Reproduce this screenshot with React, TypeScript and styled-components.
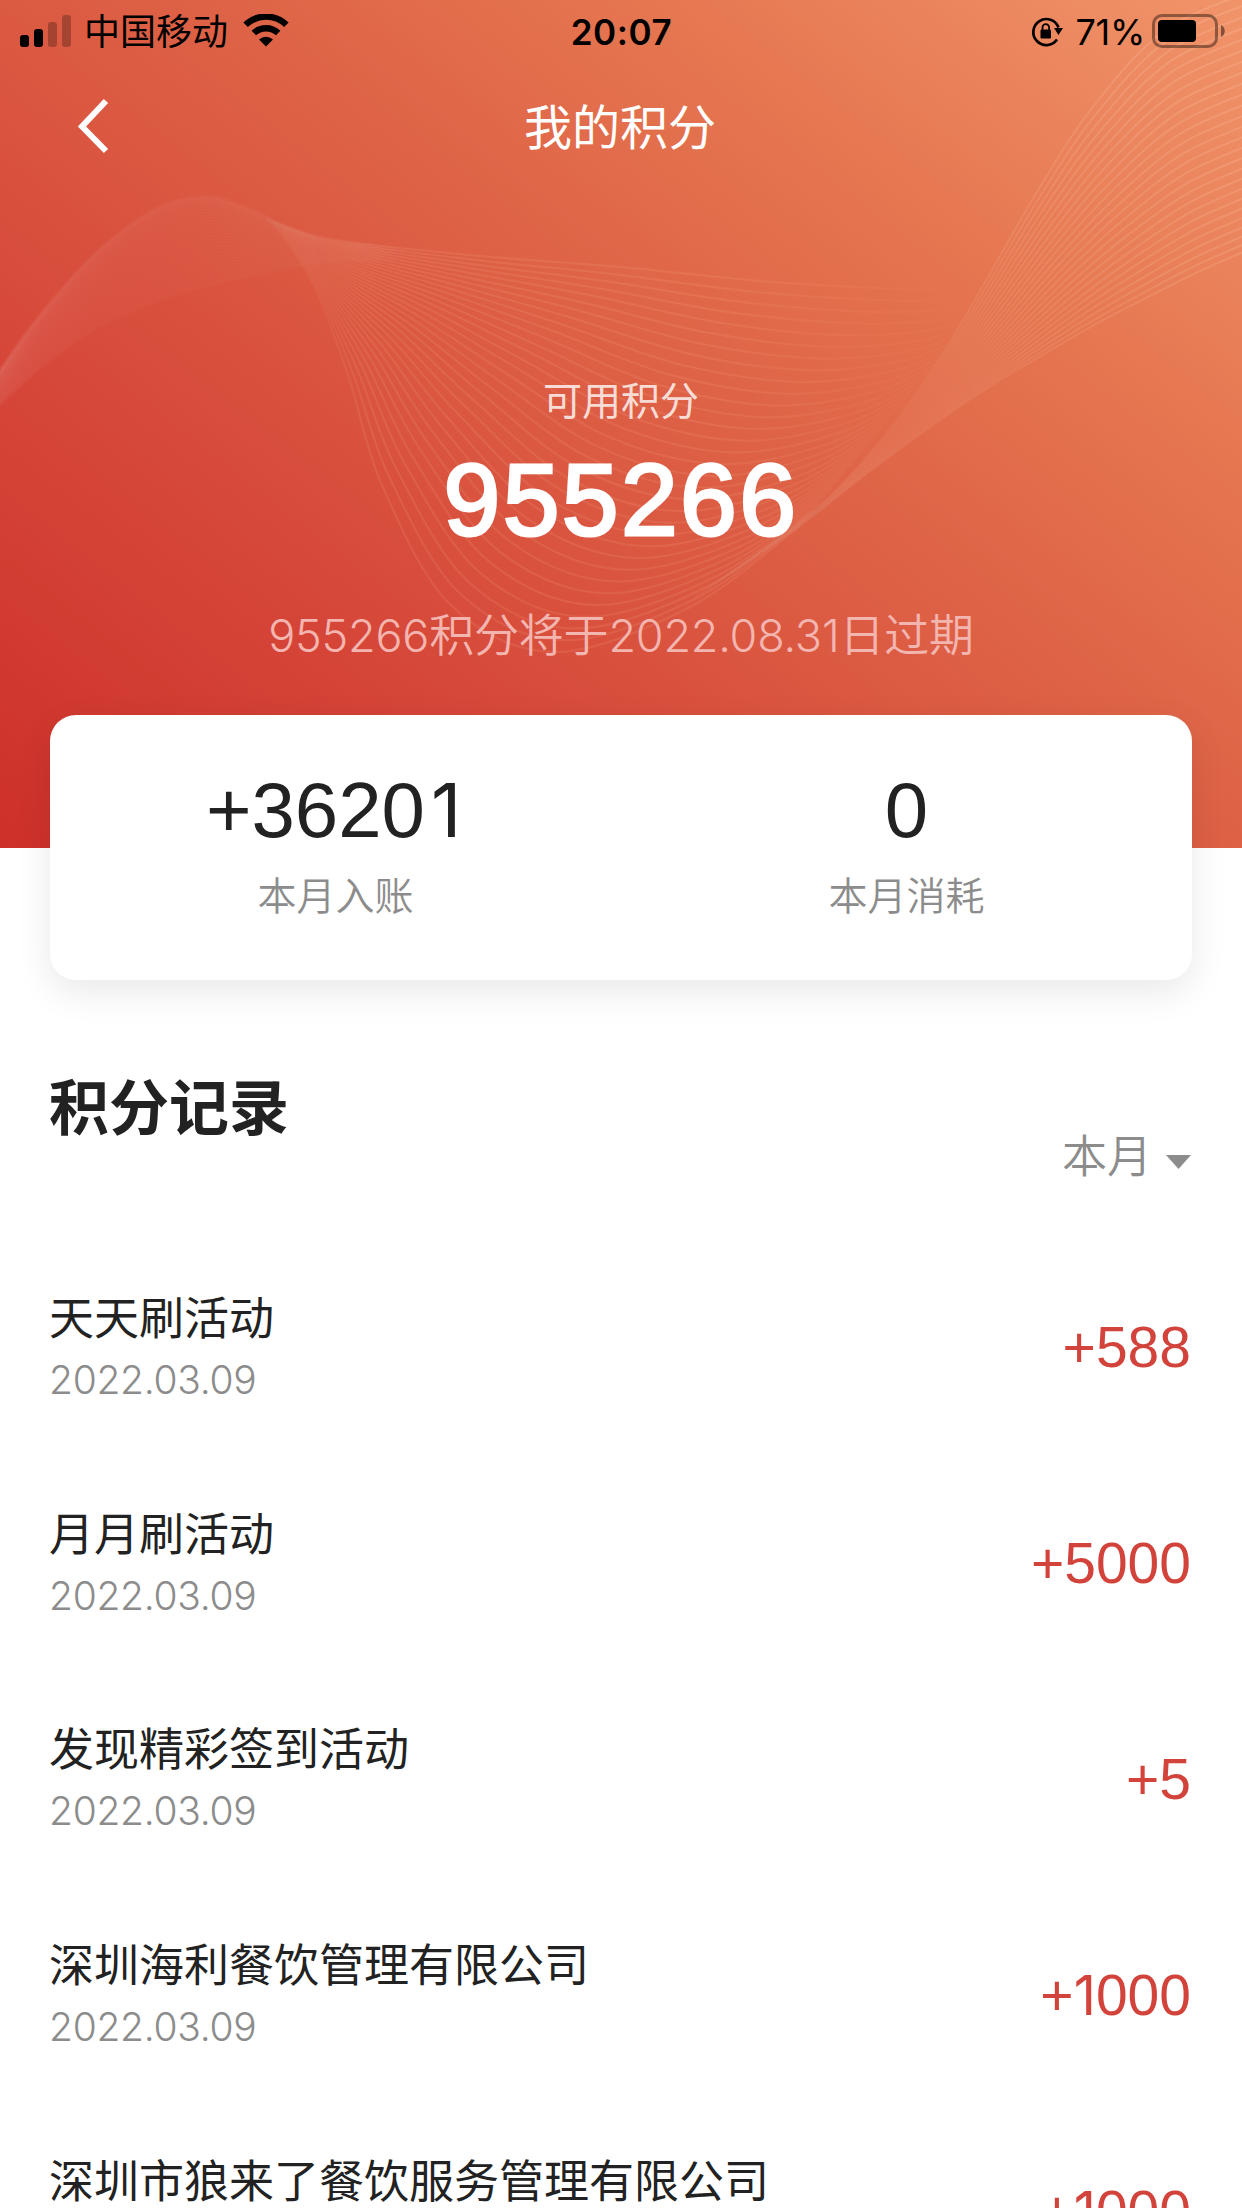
import React from 'react';
import styled, { createGlobalStyle } from 'styled-components';

const GlobalStyle = createGlobalStyle`
  * { box-sizing: border-box; }
  body {
    margin: 0;
    background: #ffffff;
    font-family: Inter, "Noto Sans CJK SC", sans-serif;
    color: #222222;
  }
`;

type Point = [number, number];

const lerpLine = (a: Point[], b: Point[], t: number): Point[] =>
  a.map(([x, y], i) => [x + (b[i][0] - x) * t, y + (b[i][1] - y) * t]);

const smoothPath = (pts: Point[]): string => {
  let d = `M${pts[0][0].toFixed(1)} ${pts[0][1].toFixed(1)}`;
  for (let i = 0; i < pts.length - 1; i++) {
    const p0 = pts[Math.max(0, i - 1)];
    const p1 = pts[i];
    const p2 = pts[i + 1];
    const p3 = pts[Math.min(pts.length - 1, i + 2)];
    const c = [
      p1[0] + (p2[0] - p0[0]) / 6,
      p1[1] + (p2[1] - p0[1]) / 6,
      p2[0] - (p3[0] - p1[0]) / 6,
      p2[1] - (p3[1] - p1[1]) / 6,
      p2[0],
      p2[1],
    ].map((v) => v.toFixed(1));
    d += `C${c.join(' ')}`;
  }
  return d;
};

const family = (a: Point[], b: Point[], count: number, ease = 1): string[] =>
  Array.from({ length: count }, (_, i) =>
    smoothPath(lerpLine(a, b, Math.pow(i / (count - 1), ease))),
  );

const crestLines = family(
  [[-6, 379], [40, 315], [99, 250], [158, 208], [206, 197], [250, 209], [290, 228], [341, 241], [436, 253]],
  [[-6, 410], [40, 368], [99, 326], [158, 300], [204, 286], [246, 276], [290, 268], [341, 262], [436, 262]],
  30,
  1.3,
);

const fanLines = family(
  [[262, 216], [300, 231], [341, 241], [480, 256], [620, 267], [760, 281], [880, 288], [960, 290], [1000, 288]],
  [[262, 216], [285, 240], [317, 293], [349, 378], [382, 485], [450, 604], [554, 652], [690, 607], [800, 526]],
  32,
);

const ribbonLines = family(
  [[640, 634], [791, 533], [872, 470], [977, 395], [1080, 333], [1140, 301], [1200, 271], [1260, 245]],
  [[640, 634], [784, 533], [860, 464], [940, 358], [1037, 192], [1096, 103], [1167, 29], [1260, -12]],
  26,
  1.1,
);

const Waves = () => (
  <WaveArt viewBox="0 0 1242 848" fill="none">
    <defs>
      <linearGradient id="crest" gradientUnits="userSpaceOnUse" x1="0" y1="0" x2="436" y2="0">
        <stop offset="0" stopColor="#fff" stopOpacity="0.02" />
        <stop offset="0.5" stopColor="#fff" stopOpacity="0.02" />
        <stop offset="0.75" stopColor="#fff" stopOpacity="0.008" />
        <stop offset="1" stopColor="#fff" stopOpacity="0" />
      </linearGradient>
      <linearGradient id="fan" gradientUnits="userSpaceOnUse" x1="262" y1="0" x2="1000" y2="0">
        <stop offset="0" stopColor="#ffc0a0" stopOpacity="0" />
        <stop offset="0.05" stopColor="#ffc0a0" stopOpacity="0.03" />
        <stop offset="0.14" stopColor="#ffc0a0" stopOpacity="0.12" />
        <stop offset="0.6" stopColor="#ffc0a0" stopOpacity="0.12" />
        <stop offset="1" stopColor="#ffc0a0" stopOpacity="0" />
      </linearGradient>
      <linearGradient id="ribbon" gradientUnits="userSpaceOnUse" x1="640" y1="600" x2="1242" y2="100">
        <stop offset="0" stopColor="#ffd8c0" stopOpacity="0" />
        <stop offset="0.25" stopColor="#ffd8c0" stopOpacity="0.014" />
        <stop offset="0.4" stopColor="#ffd8c0" stopOpacity="0.04" />
        <stop offset="0.6" stopColor="#ffd8c0" stopOpacity="0.11" />
        <stop offset="1" stopColor="#ffd8c0" stopOpacity="0.18" />
      </linearGradient>
    </defs>
    <g stroke="url(#crest)" strokeWidth="4">
      {crestLines.map((d, i) => <path key={i} d={d} />)}
    </g>
    <g stroke="url(#fan)" strokeWidth="2">
      {fanLines.map((d, i) => <path key={i} d={d} />)}
    </g>
    <g stroke="url(#ribbon)" strokeWidth="2">
      {ribbonLines.map((d, i) => <path key={i} d={d} />)}
    </g>
  </WaveArt>
);

const Screen = styled.main`
  width: 1242px;
  height: 2208px;
  overflow: hidden;
  background: #ffffff;
`;

const Hero = styled.header`
  position: relative;
  height: 848px;
  background: linear-gradient(38deg, #cd3029 0%, #d54437 24%, #dc5c43 49%, #e57650 74%, #f1946a 100%);
`;

const WaveArt = styled.svg`
  position: absolute;
  inset: 0;
  width: 1242px;
  height: 848px;
`;

const HeroContent = styled.div`
  position: relative;
  display: flex;
  flex-direction: column;
`;

const StatusBar = styled.div`
  display: grid;
  grid-template-columns: 1fr auto 1fr;
  align-items: center;
  height: 60px;
  padding: 0 16px 0 20px;
  color: #000000;
  font-size: 36px;
  line-height: 60px;
`;

const StatusSide = styled.div<{ $end?: boolean }>`
  display: flex;
  align-items: center;
  justify-content: ${(p) => (p.$end ? 'flex-end' : 'flex-start')};
`;

const Carrier = styled.span`
  margin: 2px 15px 0 12px;
`;

const Clock = styled.span`
  font-weight: 600;
  font-size: 35px;
  letter-spacing: 0.6px;
  padding: 1px 3px 0 0;
`;

const BatteryLevel = styled.span`
  margin: 1px 7px 0 13px;
  letter-spacing: -0.3px;
`;

const NavBar = styled.nav`
  display: grid;
  grid-template-columns: 120px 1fr 120px;
  align-items: center;
  height: 132px;
`;

const BackButton = styled.button`
  display: flex;
  padding: 0 0 0 74px;
  border: 0;
  background: none;
`;

const PageTitle = styled.h1`
  margin: 4px 2px 0 0;
  text-align: center;
  font-size: 48px;
  line-height: 60px;
  font-weight: 400;
  color: #ffffff;
`;

const Balance = styled.section`
  display: flex;
  flex-direction: column;
  align-items: center;
  padding-top: 189px;
`;

const BalanceLabel = styled.div`
  font-size: 39px;
  line-height: 40px;
  color: rgba(255, 255, 255, 0.8);
`;

const BalanceValue = styled.div`
  margin-top: 24px;
  font-family: "Liberation Sans", Arial, sans-serif;
  font-size: 102px;
  line-height: 110px;
  letter-spacing: 2.4px;
  -webkit-text-stroke: 3px #ffffff;
  color: #ffffff;
`;

const BalanceNote = styled.div`
  margin-top: 51px;
  font-size: 45px;
  line-height: 60px;
  font-weight: 350;
  letter-spacing: -0.2px;
  color: #f3b5b0;
`;

const SummaryCard = styled.section`
  position: relative;
  display: grid;
  grid-template-columns: 1fr 1fr;
  height: 265px;
  margin: -133px 50px 0;
  padding-top: 50px;
  border-radius: 26px;
  background: #ffffff;
  box-shadow: 0 12px 36px rgba(0, 0, 0, 0.09);
`;

const SummaryItem = styled.div`
  display: flex;
  flex-direction: column;
  align-items: center;
`;

const SummaryValue = styled.div`
  font-family: "Liberation Sans", Arial, sans-serif;
  font-size: 78px;
  line-height: 90px;
`;

const SummaryLabel = styled.div`
  margin-top: 21px;
  font-size: 39px;
  line-height: 40px;
  font-weight: 350;
  color: #8c8c8c;
`;

const RecordsHeader = styled.div`
  display: flex;
  justify-content: space-between;
  height: 109px;
  margin: 93px 51px 57px 49px;
`;

const RecordsTitle = styled.h2`
  margin: 0;
  font-size: 60px;
  line-height: 70px;
  font-weight: 600;
`;

const MonthFilter = styled.button`
  display: flex;
  align-items: center;
  align-self: flex-end;
  gap: 14px;
  padding: 0;
  border: 0;
  background: none;
  font: 350 45px/50px Inter, "Noto Sans CJK SC", sans-serif;
  color: #8c8c8c;
`;

const Caret = styled.svg`
  width: 25px;
  height: 14px;
  margin-top: 10px;
`;

const RecordList = styled.ul`
  margin: 0;
  padding: 0 51px 0 49px;
  list-style: none;
`;

const RecordRow = styled.li`
  display: flex;
  align-items: center;
  justify-content: space-between;
  height: 215.8px;
`;

const RecordName = styled.div`
  font-size: 45px;
  line-height: 50px;
`;

const RecordDate = styled.div`
  margin-top: 16px;
  font-size: 39px;
  line-height: 40px;
  font-weight: 300;
  letter-spacing: -0.3px;
  color: #8c8c8c;
`;

const RecordAmount = styled.div`
  padding-top: 1px;
  font-family: "Liberation Sans", Arial, sans-serif;
  font-size: 57px;
  line-height: 60px;
  color: #d2443b;
`;

const PlainOne = styled.span<{ $afterDigit: boolean }>`
  margin: 0 ${(p) => (p.$afterDigit ? '0.05em 0 0.08em' : '0 0 0')};
  font-family: Inter, sans-serif;
  font-size: 0.96em;
  line-height: 1;
`;

/* Figures use a footless "1", set tight after a plus sign. */
const Figure = ({ value }: { value: string }) => {
  const parts = value.split(/(1)/);
  return (
    <>
      {parts.map((part, i) =>
        part === '1' ? (
          <PlainOne key={i} $afterDigit={/\d$/.test(parts[i - 1])}>1</PlainOne>
        ) : (
          part
        ),
      )}
    </>
  );
};

const records = [
  { name: '天天刷活动', date: '2022.03.09', amount: '+588' },
  { name: '月月刷活动', date: '2022.03.09', amount: '+5000' },
  { name: '发现精彩签到活动', date: '2022.03.09', amount: '+5' },
  { name: '深圳海利餐饮管理有限公司', date: '2022.03.09', amount: '+1000' },
  { name: '深圳市狼来了餐饮服务管理有限公司', date: '2022.03.09', amount: '+1000' },
];

const SignalIcon = () => (
  <svg width="52" height="34" viewBox="0 0 52 34">
    <rect x="0" y="21" width="9" height="12" rx="3" />
    <rect x="14" y="15" width="9" height="18" rx="3" />
    <rect x="28" y="8" width="9" height="25" rx="3" opacity="0.25" />
    <rect x="42" y="1" width="9" height="32" rx="3" opacity="0.25" />
  </svg>
);

const WifiIcon = () => (
  <svg width="46" height="34" viewBox="0 0 46 34">
    <g fill="none" stroke="#000" strokeWidth="6.4">
      <path d="M2.6 10.8a29.5 29.5 0 0 1 40.8 0" />
      <path d="M10.8 19a18 18 0 0 1 24.4 0" />
    </g>
    <path d="M16 25.500a10.500 10.500 0 0 1 14 0L23 32.500z" />
  </svg>
);

const RotationLockIcon = () => (
  <svg width="32" height="32" viewBox="0 0 32 32">
    <path d="M26 24.500A13 13 0 1 1 27.500 12.500" fill="none" stroke="#000" strokeWidth="2.700" />
    <path d="M23 13h9l-4.500 7z" />
    <rect x="9.500" y="14.500" width="10.500" height="9" rx="1.200" />
    <path d="M11.500 15.500v-3a3.300 3.300 0 0 1 6.600 0v3" fill="none" stroke="#000" strokeWidth="1.800" />
  </svg>
);

const BatteryIcon = () => (
  <svg width="74" height="34" viewBox="0 0 74 34">
    <rect x="1.500" y="1.500" width="63" height="31" rx="8.500" fill="none" stroke="#000" strokeOpacity="0.4" strokeWidth="3" />
    <rect x="6" y="6" width="38" height="22" rx="4" />
    <path d="M69 11c5 2 5 10 0 12z" opacity="0.45" />
  </svg>
);

export default function App() {
  return (
    <>
      <GlobalStyle />
      <Screen>
        <Hero>
          <Waves />
          <HeroContent>
            <StatusBar>
              <StatusSide>
                <SignalIcon />
                <Carrier>中国移动</Carrier>
                <WifiIcon />
              </StatusSide>
              <Clock>20:07</Clock>
              <StatusSide $end>
                <RotationLockIcon />
                <BatteryLevel>71%</BatteryLevel>
                <BatteryIcon />
              </StatusSide>
            </StatusBar>
            <NavBar>
              <BackButton aria-label="返回">
                <svg width="40" height="56" viewBox="0 0 40 56">
                  <path d="M32 3L8 28.500L32 53" fill="none" stroke="#fff" strokeWidth="6" />
                </svg>
              </BackButton>
              <PageTitle>我的积分</PageTitle>
            </NavBar>
            <Balance>
              <BalanceLabel>可用积分</BalanceLabel>
              <BalanceValue>955266</BalanceValue>
              <BalanceNote>955266积分将于2022.08.31日过期</BalanceNote>
            </Balance>
          </HeroContent>
        </Hero>
        <SummaryCard>
          <SummaryItem>
            <SummaryValue><Figure value="+36201" /></SummaryValue>
            <SummaryLabel>本月入账</SummaryLabel>
          </SummaryItem>
          <SummaryItem>
            <SummaryValue><Figure value="0" /></SummaryValue>
            <SummaryLabel>本月消耗</SummaryLabel>
          </SummaryItem>
        </SummaryCard>
        <RecordsHeader>
          <RecordsTitle>积分记录</RecordsTitle>
          <MonthFilter>
            本月
            <Caret viewBox="0 0 25 14"><path d="M0 0h25L12.500 14z" fill="#8c8c8c" /></Caret>
          </MonthFilter>
        </RecordsHeader>
        <RecordList>
          {records.map((r, i) => (
            <RecordRow key={i}>
              <div>
                <RecordName>{r.name}</RecordName>
                <RecordDate>{r.date}</RecordDate>
              </div>
              <RecordAmount><Figure value={r.amount} /></RecordAmount>
            </RecordRow>
          ))}
        </RecordList>
      </Screen>
    </>
  );
}
